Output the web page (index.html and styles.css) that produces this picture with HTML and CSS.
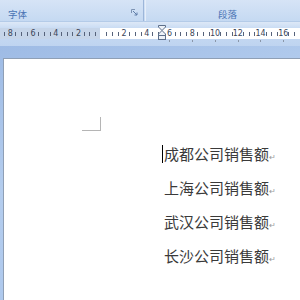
FILE: index.html
```html
<!DOCTYPE html>
<html lang="zh-CN">
<head>
    <meta charset="UTF-8">
    <title>销售额</title>
    <link rel="stylesheet" href="styles.css">
</head>
<body>
    <!-- 功能区分组标签 -->
    <div class="ribbon">
        <div class="group group-font">
            <span class="group-label">字体</span>
            <svg class="launcher" width="7" height="7" viewBox="0 0 7 7">
                <path d="M0.5 4V0.5H4" fill="none" stroke="#7d93b3" stroke-width="1"/>
                <path d="M2 2L6 6M6 3.5V6H3.5" fill="none" stroke="#5f7da8" stroke-width="1"/>
            </svg>
        </div>
        <div class="group-sep"></div>
        <div class="group group-para">
            <span class="group-label">段落</span>
        </div>
    </div>

    <!-- 标尺 -->
    <div class="ruler-bar">
        <div class="ruler">
            <div class="ruler-margin"></div>
            <div class="ruler-body"></div>
            <div class="ruler-marks">
                <span class="t"></span><span class="t"></span><span class="n">8</span><span class="t"></span><span class="t"></span><span class="t"></span>
                <span class="n">6</span><span class="t"></span><span class="t"></span><span class="t"></span>
                <span class="n">4</span><span class="t"></span><span class="t"></span><span class="t"></span>
                <span class="n">2</span><span class="t"></span><span class="t"></span><span class="t"></span>
                <span class="e"></span><span class="t"></span><span class="t"></span><span class="t"></span>
                <span class="n">2</span><span class="t"></span><span class="t"></span><span class="t"></span>
                <span class="n">4</span><span class="t"></span><span class="t"></span><span class="t"></span>
                <span class="n tab">6</span><span class="t"></span><span class="t"></span><span class="t"></span>
                <span class="n tab">8</span><span class="t"></span><span class="t"></span><span class="t"></span>
                <span class="n tab">10</span><span class="t"></span><span class="t"></span><span class="t"></span>
                <span class="n tab">12</span><span class="t"></span><span class="t"></span><span class="t"></span>
                <span class="n tab">14</span><span class="t"></span><span class="t"></span><span class="t"></span>
                <span class="n tab">16</span><span class="t"></span><span class="t"></span><span class="t"></span>
            </div>
            <!-- 缩进标记 -->
            <svg class="indent" width="8" height="15" viewBox="0 0 8 15">
                <path d="M0.5 0.5H7.5V2L4 5.5L0.5 2Z" fill="#eef2f8" stroke="#5d6f8a"/>
                <path d="M4 5.5L7.5 9V10.5H0.5V9Z" fill="#eef2f8" stroke="#5d6f8a"/>
                <rect x="0.5" y="10.5" width="7" height="4" fill="#eef2f8" stroke="#5d6f8a"/>
            </svg>
        </div>
    </div>

    <!-- 文档区 -->
    <div class="workspace">
        <div class="page">
            <div class="corner-mark"></div>
            <div class="content">
                <p class="line"><span class="caret"></span>成都公司销售额<span class="pmark">↵</span></p>
                <p class="line">上海公司销售额<span class="pmark">↵</span></p>
                <p class="line">武汉公司销售额<span class="pmark">↵</span></p>
                <p class="line">长沙公司销售额<span class="pmark">↵</span></p>
            </div>
        </div>
    </div>
</body>
</html>
```
FILE: styles.css
```css
body {
    margin: 0;
    width: 300px;
    height: 300px;
    overflow: hidden;
    font-family: "Noto Sans CJK SC", "Noto Sans", sans-serif;
    background: #ffffff;
}
.ribbon {
    height: 21px;
    display: flex;
    background: linear-gradient(#d6e4f6, #c5d9f2);
    border-bottom: 1px solid #b4cbe8;
}
.group {
    position: relative;
    height: 21px;
}
.group-font {
    width: 143px;
}
.group-para {
    flex: 1;
}
.group-label {
    position: absolute;
    top: 8px;
    font-size: 9.5px;
    line-height: 12px;
    color: #4a74b4;
}
.group-font .group-label {
    left: 8px;
}
.group-para .group-label {
    left: 72px;
}
.launcher {
    position: absolute;
    left: 131px;
    top: 9px;
}
.group-sep {
    width: 1px;
    border-left: 1px solid #9db6d9;
    border-right: 1px solid #e6eef9;
}
.ruler-bar {
    height: 24px;
    background: linear-gradient(#dde8f7, #c6daf3 30%, #bfd4f0);
    padding-top: 6px;
    box-sizing: border-box;
}
.ruler {
    position: relative;
    height: 11px;
    display: flex;
}
.ruler-margin {
    width: 100px;
    background: #c6d5e9;
}
.ruler-body {
    flex: 1;
    background: #ffffff;
}
.ruler-marks {
    position: absolute;
    left: -4px;
    top: 0;
    height: 11px;
    display: flex;
}
.ruler-marks span {
    width: 5.7px;
    height: 11px;
    display: flex;
    justify-content: center;
    align-items: center;
    position: relative;
    font-family: "DejaVu Sans", sans-serif;
    font-size: 8px;
    color: #3c4658;
}
.ruler-marks .t::before {
    content: "";
    width: 1px;
    height: 4px;
    background: #56627a;
}
.ruler-marks .tab::after {
    content: "";
    position: absolute;
    left: 50%;
    top: 12px;
    width: 1px;
    height: 2px;
    background: #8a96a8;
}
.indent {
    position: absolute;
    left: 158px;
    top: -3px;
}
.workspace {
    height: 256px;
    padding: 12px 0 0 3px;
    background: linear-gradient(160deg, #9ebbe5 0%, #b4cdee 40%, #a8c4ec 100%);
    box-sizing: border-box;
}
.page {
    position: relative;
    height: 244px;
    background: #ffffff;
    border-top: 1px solid #8f9fb5;
    border-left: 1px solid #8f9fb5;
}
.corner-mark {
    position: absolute;
    left: 78px;
    top: 58px;
    width: 18px;
    height: 13px;
    border-right: 1px solid #b5b5b5;
    border-bottom: 1px solid #b5b5b5;
}
.content {
    padding: 84px 0 0 160px;
}
.line {
    position: relative;
    height: 22px;
    margin: 0 0 12px;
    font-size: 15px;
    line-height: 22px;
    color: #3a3a3a;
    white-space: nowrap;
}
.caret {
    position: absolute;
    left: -2px;
    top: 2px;
    width: 1px;
    height: 18px;
    background: #000000;
}
.pmark {
    font-size: 8px;
    line-height: 8px;
    color: #9a9a9a;
}
```
